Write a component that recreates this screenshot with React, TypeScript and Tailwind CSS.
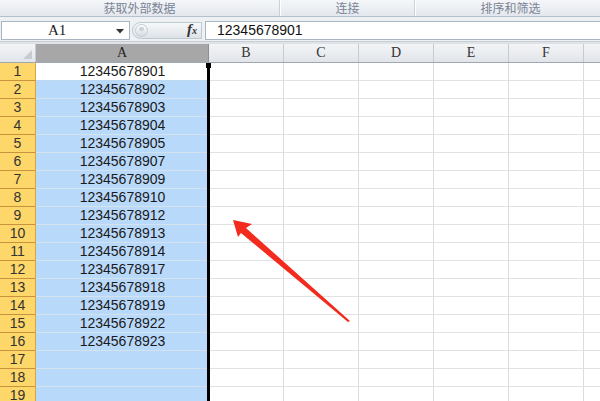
import React from "react";

const values = [
  "12345678901","12345678902","12345678903","12345678904","12345678905",
  "12345678907","12345678909","12345678910","12345678912","12345678913",
  "12345678914","12345678917","12345678918","12345678919","12345678922",
  "12345678923","","","",
];

const cols = ["B", "C", "D", "E", "F", ""];

export default function App() {
  return (
    <div className="relative w-[600px] h-[401px] overflow-hidden bg-white" style={{ fontFamily: '"Liberation Sans", "Noto Sans CJK SC", sans-serif' }}>
      {/* Ribbon group labels */}
      <div className="flex h-[17px] bg-gradient-to-b from-[#f4f6f9] to-[#e4e8ee] border-b border-[#b6c0cc] text-[12px] leading-[16px] text-[#7a8494]" style={{ fontFamily: '"Noto Sans CJK SC", sans-serif' }}>
        <div className="w-[280px] shrink-0 flex justify-center border-r border-[#c9d1db]">获取外部数据</div>
        <div className="w-[135px] shrink-0 flex justify-center border-r border-[#c9d1db] border-l border-l-white">连接</div>
        <div className="flex-1 flex justify-center pl-[5px] border-l border-l-white">排序和筛选</div>
      </div>
      {/* Formula bar */}
      <div className="flex h-[24px] pt-[4px] bg-[#eef1f4]">
        <div className="w-[129px] shrink-0 h-[19px] ml-[1px] bg-white border border-[#a9b5c3] relative">
          <span className="absolute left-[46px] top-[0px] text-[15px] leading-[17px] text-[#222]" style={{ fontFamily: '"Liberation Serif", serif' }}>A1</span>
          <svg className="absolute left-[114px] top-[7px]" width="8" height="5" viewBox="0 0 8 5"><path d="M0 0 L8 0 L4 4.5 Z" fill="#333" /></svg>
        </div>
        <div className="w-[75px] shrink-0 h-[19px] relative">
          <div className="absolute left-[2px] top-[1px] w-[70px] h-[17px] rounded-l-full bg-gradient-to-b from-[#f7f8fa] to-[#dde2e8] border border-[#bfc7d1]" />
          <div className="absolute left-[5px] top-[3px] w-[13px] h-[13px] rounded-full bg-gradient-to-b from-[#ffffff] to-[#d5dbe2] border border-[#c4cbd4]" />
          <div className="absolute left-[9px] top-[6px] w-[5px] h-[4px] rounded-sm bg-[#c9d0d8]" />
          <span className="absolute left-[57px] top-[0px] text-[15px] leading-[17px] italic font-bold text-[#333]" style={{ fontFamily: '"Liberation Serif", serif' }}>f<span className="text-[10px]">x</span></span>
        </div>
        <div className="flex-1 h-[19px] bg-white border border-[#a9b5c3] border-r-0 flex items-center pl-[11px] text-[14px] text-[#111]">12345678901</div>
      </div>
      <div className="h-[3px] bg-[#dfe3e8] border-t border-[#c8ced6]" />
      {/* Column header */}
      <div className="flex h-[19px] border-b border-[#9ea7b2] text-[14px] leading-[18px] text-[#333]" style={{ fontFamily: '"Liberation Serif", serif' }}>
        <div className="w-[36px] shrink-0 relative bg-gradient-to-b from-[#f3f4f6] to-[#e1e5ea] border-r border-[#c5cbd3]">
          <svg className="absolute right-[3px] bottom-[3px]" width="9" height="9" viewBox="0 0 9 9"><path d="M9 0 L9 9 L0 9 Z" fill="#c8ccd2" /></svg>
        </div>
        <div className="w-[173px] shrink-0 flex justify-center bg-[#a7a7a7] border-r border-[#8f8f8f] text-[#222]">A</div>
        {cols.map((c, i) => (
          <div key={i} className="w-[75px] shrink-0 flex justify-center bg-gradient-to-b from-[#f3f4f6] to-[#e1e5ea] border-r border-[#c5cbd3]">{c}</div>
        ))}
      </div>
      {/* Rows */}
      {values.map((v, r) => (
        <div key={r} className="flex h-[18px] text-[14px] leading-[17px]">
          <div className="w-[36px] shrink-0 flex justify-center bg-[#fdd76a] border-r border-[#d9a444] border-b border-b-[#c9923c] text-[#333]">{r + 1}</div>
          <div className={`w-[173px] shrink-0 flex justify-center text-[#1a1a1a] border-b ${r === 0 ? "bg-white border-[#bcd7f0]" : "bg-[#b9d9fb] border-[#d4e2ee]"}`}>{v}</div>
          {cols.map((c, i) => (
            <div key={i} className="w-[75px] shrink-0 border-r border-[#dadcdf] border-b border-b-[#e1e2e4]" />
          ))}
        </div>
      ))}
      {/* Selection border */}
      <div className="absolute left-[207px] top-[64px] w-[3px] h-[340px] bg-black" />
      <div className="absolute left-[206px] top-[63px] w-[5px] h-[5px] bg-black" />
      {/* Red arrow */}
      <svg className="absolute left-0 top-0" width="600" height="401" viewBox="0 0 600 401">
        <polygon points="233,220 252,224 246,228 350,321 348,322 241,233 238,237" fill="#f32a1e" />
      </svg>
    </div>
  );
}
